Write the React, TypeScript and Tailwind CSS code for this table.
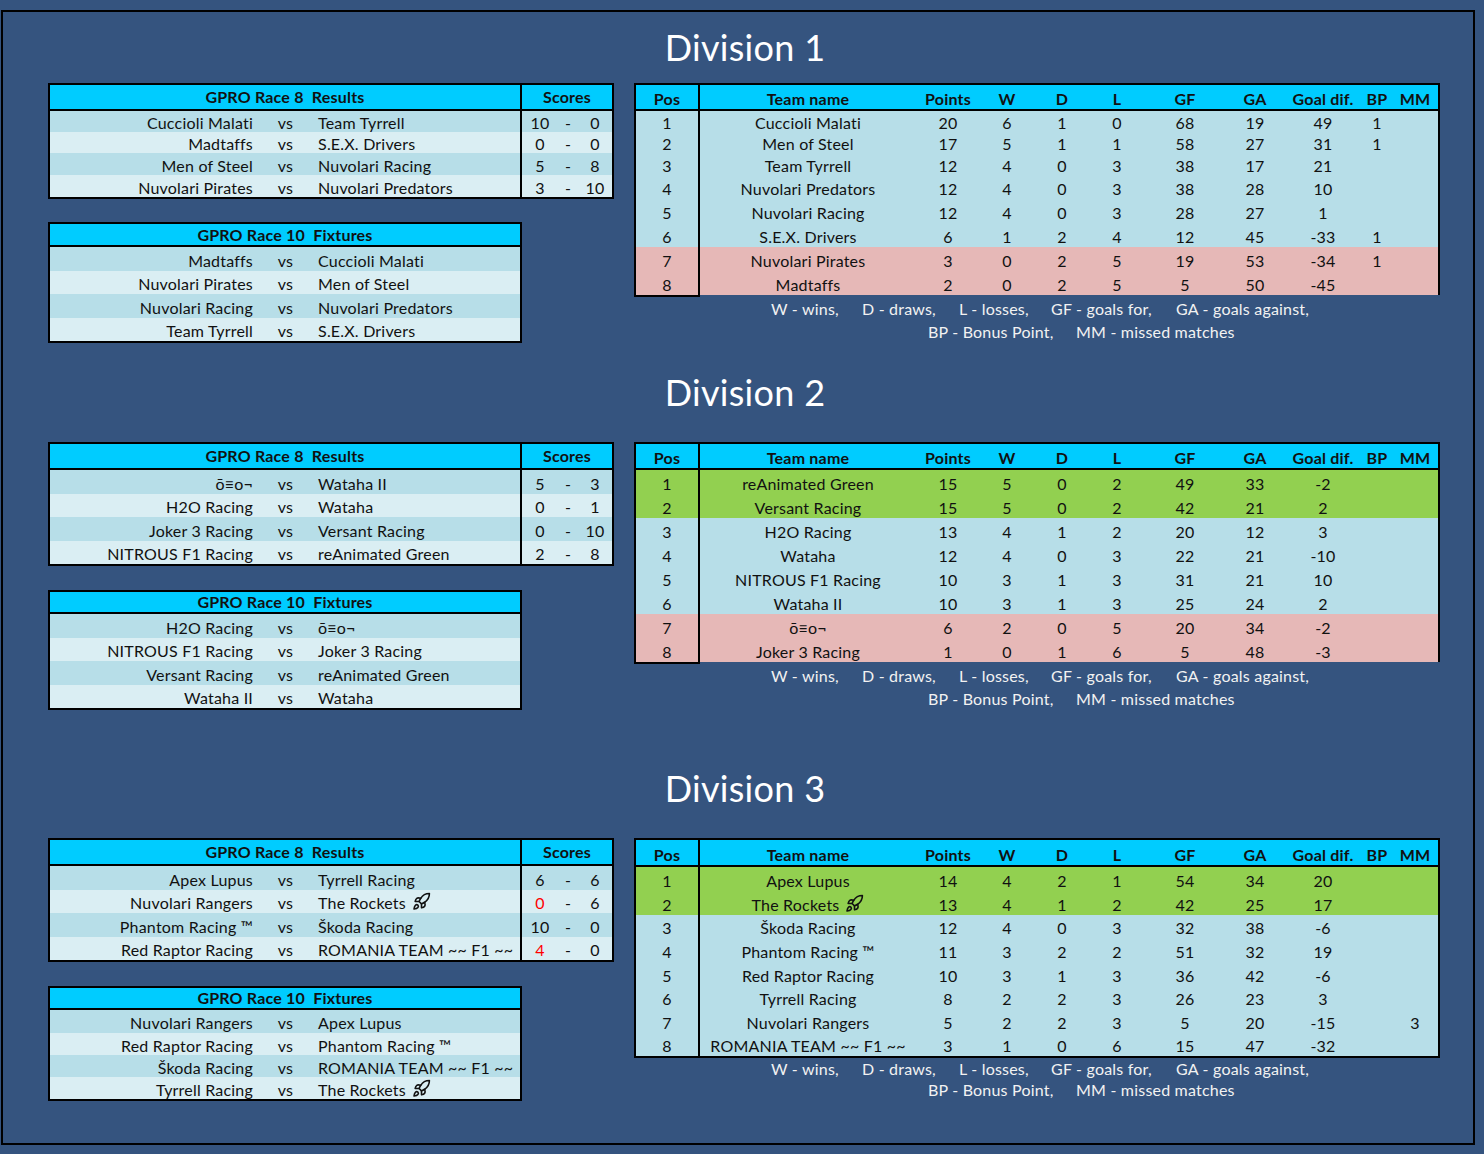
import React from 'react';
import { Rocket } from 'lucide-react';

type Node = React.ReactNode;

const RocketIcon = () => (
  <Rocket className="inline-block ml-[6px] w-[19px] h-[19px] -mt-[3px]" strokeWidth={2} />
);
const Rockets = () => (
  <span className="inline-flex items-center">
    The Rockets
    <RocketIcon />
  </span>
);
const WEIRD = 'ō≡o¬';

type Result = { home: Node; away: Node; s1: string; s2: string; red1?: boolean };
type Fixture = { home: Node; away: Node };
type Standing = {
  team: Node;
  pts: string;
  w: string;
  d: string;
  l: string;
  gf: string;
  ga: string;
  gd: string;
  bp?: string;
  mm?: string;
  c: 'b' | 'g' | 'p';
};

type Division = {
  name: string;
  titleBlock: string;
  resHeader: string;
  resRows: string[];
  results: Result[];
  fixGap: string;
  fixHeader: string;
  fixRows: string[];
  fixtures: Fixture[];
  stHeader: string;
  stRows: string[];
  standings: Standing[];
  fullBottom: boolean;
  lineH: string;
};

const rowBg = ['bg-[#b7dee8]', 'bg-[#daeef3]', 'bg-[#b7dee8]', 'bg-[#daeef3]'];
const stBg = { b: 'bg-[#b7dee8]', g: 'bg-[#92d050]', p: 'bg-[#e6b8b7]' };

const divisions: Division[] = [
  {
    name: 'Division 1',
    titleBlock: 'h-[71px] pb-[14px]',
    resHeader: 'h-[26px]',
    resRows: ['h-[21px]', 'h-[21px]', 'h-[22px]', 'h-[22px]'],
    results: [
      { home: 'Cuccioli Malati', away: 'Team Tyrrell', s1: '10', s2: '0' },
      { home: 'Madtaffs', away: 'S.E.X. Drivers', s1: '0', s2: '0' },
      { home: 'Men of Steel', away: 'Nuvolari Racing', s1: '5', s2: '8' },
      { home: 'Nuvolari Pirates', away: 'Nuvolari Predators', s1: '3', s2: '10' },
    ],
    fixGap: 'mt-[23px]',
    fixHeader: 'h-[23px]',
    fixRows: ['h-[24px]', 'h-[23px]', 'h-[24px]', 'h-[23px]'],
    fixtures: [
      { home: 'Madtaffs', away: 'Cuccioli Malati' },
      { home: 'Nuvolari Pirates', away: 'Men of Steel' },
      { home: 'Nuvolari Racing', away: 'Nuvolari Predators' },
      { home: 'Team Tyrrell', away: 'S.E.X. Drivers' },
    ],
    stHeader: 'h-[26px]',
    stRows: ['h-[21px]', 'h-[21px]', 'h-[22px]', 'h-[24px]', 'h-[24px]', 'h-[24px]', 'h-[25px]', 'h-[23px]'],
    standings: [
      { team: 'Cuccioli Malati', pts: '20', w: '6', d: '1', l: '0', gf: '68', ga: '19', gd: '49', bp: '1', c: 'b' },
      { team: 'Men of Steel', pts: '17', w: '5', d: '1', l: '1', gf: '58', ga: '27', gd: '31', bp: '1', c: 'b' },
      { team: 'Team Tyrrell', pts: '12', w: '4', d: '0', l: '3', gf: '38', ga: '17', gd: '21', c: 'b' },
      { team: 'Nuvolari Predators', pts: '12', w: '4', d: '0', l: '3', gf: '38', ga: '28', gd: '10', c: 'b' },
      { team: 'Nuvolari Racing', pts: '12', w: '4', d: '0', l: '3', gf: '28', ga: '27', gd: '1', c: 'b' },
      { team: 'S.E.X. Drivers', pts: '6', w: '1', d: '2', l: '4', gf: '12', ga: '45', gd: '-33', bp: '1', c: 'b' },
      { team: 'Nuvolari Pirates', pts: '3', w: '0', d: '2', l: '5', gf: '19', ga: '53', gd: '-34', bp: '1', c: 'p' },
      { team: 'Madtaffs', pts: '2', w: '0', d: '2', l: '5', gf: '5', ga: '50', gd: '-45', c: 'p' },
    ],
    fullBottom: false,
    lineH: 'h-[23px]',
  },
  {
    name: 'Division 2',
    titleBlock: 'h-[99px] pb-[28px]',
    resHeader: 'h-[26px]',
    resRows: ['h-[24px]', 'h-[23px]', 'h-[24px]', 'h-[23px]'],
    results: [
      { home: WEIRD, away: 'Wataha II', s1: '5', s2: '3' },
      { home: 'H2O Racing', away: 'Wataha', s1: '0', s2: '1' },
      { home: 'Joker 3 Racing', away: 'Versant Racing', s1: '0', s2: '10' },
      { home: 'NITROUS F1 Racing', away: 'reAnimated Green', s1: '2', s2: '8' },
    ],
    fixGap: 'mt-[24px]',
    fixHeader: 'h-[22px]',
    fixRows: ['h-[24px]', 'h-[23px]', 'h-[24px]', 'h-[23px]'],
    fixtures: [
      { home: 'H2O Racing', away: WEIRD },
      { home: 'NITROUS F1 Racing', away: 'Joker 3 Racing' },
      { home: 'Versant Racing', away: 'reAnimated Green' },
      { home: 'Wataha II', away: 'Wataha' },
    ],
    stHeader: 'h-[26px]',
    stRows: ['h-[24px]', 'h-[24px]', 'h-[24px]', 'h-[24px]', 'h-[24px]', 'h-[24px]', 'h-[24px]', 'h-[24px]'],
    standings: [
      { team: 'reAnimated Green', pts: '15', w: '5', d: '0', l: '2', gf: '49', ga: '33', gd: '-2', c: 'g' },
      { team: 'Versant Racing', pts: '15', w: '5', d: '0', l: '2', gf: '42', ga: '21', gd: '2', c: 'g' },
      { team: 'H2O Racing', pts: '13', w: '4', d: '1', l: '2', gf: '20', ga: '12', gd: '3', c: 'b' },
      { team: 'Wataha', pts: '12', w: '4', d: '0', l: '3', gf: '22', ga: '21', gd: '-10', c: 'b' },
      { team: 'NITROUS F1 Racing', pts: '10', w: '3', d: '1', l: '3', gf: '31', ga: '21', gd: '10', c: 'b' },
      { team: 'Wataha II', pts: '10', w: '3', d: '1', l: '3', gf: '25', ga: '24', gd: '2', c: 'b' },
      { team: WEIRD, pts: '6', w: '2', d: '0', l: '5', gf: '20', ga: '34', gd: '-2', c: 'p' },
      { team: 'Joker 3 Racing', pts: '1', w: '0', d: '1', l: '6', gf: '5', ga: '48', gd: '-3', c: 'p' },
    ],
    fullBottom: false,
    lineH: 'h-[23px]',
  },
  {
    name: 'Division 3',
    titleBlock: 'h-[128px] pb-[28px]',
    resHeader: 'h-[26px]',
    resRows: ['h-[24px]', 'h-[23px]', 'h-[24px]', 'h-[23px]'],
    results: [
      { home: 'Apex Lupus', away: 'Tyrrell Racing', s1: '6', s2: '6' },
      { home: 'Nuvolari Rangers', away: <Rockets />, s1: '0', s2: '6', red1: true },
      { home: 'Phantom Racing ™', away: 'Škoda Racing', s1: '10', s2: '0' },
      { home: 'Red Raptor Racing', away: 'ROMANIA TEAM ~~ F1 ~~', s1: '4', s2: '0', red1: true },
    ],
    fixGap: 'mt-[24px]',
    fixHeader: 'h-[22px]',
    fixRows: ['h-[23px]', 'h-[22px]', 'h-[22px]', 'h-[22px]'],
    fixtures: [
      { home: 'Nuvolari Rangers', away: 'Apex Lupus' },
      { home: 'Red Raptor Racing', away: 'Phantom Racing ™' },
      { home: 'Škoda Racing', away: 'ROMANIA TEAM ~~ F1 ~~' },
      { home: 'Tyrrell Racing', away: <Rockets /> },
    ],
    stHeader: 'h-[27px]',
    stRows: ['h-[24px]', 'h-[24px]', 'h-[23px]', 'h-[24px]', 'h-[24px]', 'h-[23px]', 'h-[24px]', 'h-[23px]'],
    standings: [
      { team: 'Apex Lupus', pts: '14', w: '4', d: '2', l: '1', gf: '54', ga: '34', gd: '20', c: 'g' },
      { team: <Rockets />, pts: '13', w: '4', d: '1', l: '2', gf: '42', ga: '25', gd: '17', c: 'g' },
      { team: 'Škoda Racing', pts: '12', w: '4', d: '0', l: '3', gf: '32', ga: '38', gd: '-6', c: 'b' },
      { team: 'Phantom Racing ™', pts: '11', w: '3', d: '2', l: '2', gf: '51', ga: '32', gd: '19', c: 'b' },
      { team: 'Red Raptor Racing', pts: '10', w: '3', d: '1', l: '3', gf: '36', ga: '42', gd: '-6', c: 'b' },
      { team: 'Tyrrell Racing', pts: '8', w: '2', d: '2', l: '3', gf: '26', ga: '23', gd: '3', c: 'b' },
      { team: 'Nuvolari Rangers', pts: '5', w: '2', d: '2', l: '3', gf: '5', ga: '20', gd: '-15', mm: '3', c: 'b' },
      { team: 'ROMANIA TEAM ~~ F1 ~~', pts: '3', w: '1', d: '0', l: '6', gf: '15', ga: '47', gd: '-32', c: 'b' },
    ],
    fullBottom: true,
    lineH: 'h-[21px]',
  },
];

function ResultsTable({ d }: { d: Division }) {
  return (
    <div className="w-[566px] border-2 border-black flex">
      <div className="w-[472px] border-r-2 border-black">
        <div className={`${d.resHeader} bg-[#00ccff] border-b-2 border-black flex items-center justify-center font-bold whitespace-pre`}>
          {'GPRO Race 8  Results'}
        </div>
        {d.results.map((r, i) => (
          <div key={i} className={`${d.resRows[i]} ${rowBg[i]} flex items-center pt-[3px]`}>
            <div className="w-[203px] text-right whitespace-nowrap">{r.home}</div>
            <div className="w-[65px] text-center">vs</div>
            <div className="flex-1 whitespace-nowrap">{r.away}</div>
          </div>
        ))}
      </div>
      <div className="flex-1">
        <div className={`${d.resHeader} bg-[#00ccff] border-b-2 border-black flex items-center justify-center font-bold`}>
          Scores
        </div>
        {d.results.map((r, i) => (
          <div key={i} className={`${d.resRows[i]} ${rowBg[i]} flex items-center pt-[3px]`}>
            <div className={`w-[36px] text-center ${r.red1 ? 'text-[#ff0000]' : ''}`}>{r.s1}</div>
            <div className="w-[20px] text-center">-</div>
            <div className="flex-1 text-center">{r.s2}</div>
          </div>
        ))}
      </div>
    </div>
  );
}

function FixturesTable({ d }: { d: Division }) {
  return (
    <div className={`${d.fixGap} w-[474px] border-2 border-black`}>
      <div className={`${d.fixHeader} bg-[#00ccff] border-b-2 border-black flex items-center justify-center font-bold whitespace-pre`}>
        {'GPRO Race 10  Fixtures'}
      </div>
      {d.fixtures.map((r, i) => (
        <div key={i} className={`${d.fixRows[i]} ${rowBg[i]} flex items-center pt-[3px]`}>
          <div className="w-[203px] text-right whitespace-nowrap">{r.home}</div>
          <div className="w-[65px] text-center">vs</div>
          <div className="flex-1 whitespace-nowrap">{r.away}</div>
        </div>
      ))}
    </div>
  );
}

const cols = [
  { k: 'team', label: 'Team name', w: 'w-[216px]' },
  { k: 'pts', label: 'Points', w: 'w-[64px]' },
  { k: 'w', label: 'W', w: 'w-[54px]' },
  { k: 'd', label: 'D', w: 'w-[56px]' },
  { k: 'l', label: 'L', w: 'w-[54px]' },
  { k: 'gf', label: 'GF', w: 'w-[82px]' },
  { k: 'ga', label: 'GA', w: 'w-[58px]' },
  { k: 'gd', label: 'Goal dif.', w: 'w-[78px]' },
  { k: 'bp', label: 'BP', w: 'w-[30px]' },
  { k: 'mm', label: 'MM', w: 'w-[46px]' },
] as const;

function Standings({ d }: { d: Division }) {
  return (
    <div className="flex items-start">
      <div className="w-[66px] border-2 border-black">
        <div className={`${d.stHeader} bg-[#00ccff] border-b-2 border-black flex items-center justify-center font-bold pt-[4px]`}>
          Pos
        </div>
        {d.standings.map((s, i) => (
          <div key={i} className={`${d.stRows[i]} ${stBg[s.c]} flex items-center justify-center pt-[3px]`}>
            {i + 1}
          </div>
        ))}
      </div>
      <div className={`w-[740px] border-t-2 border-r-2 border-black ${d.fullBottom ? 'border-b-2' : ''}`}>
        <div className={`${d.stHeader} bg-[#00ccff] border-b-2 border-black flex items-center font-bold pt-[4px]`}>
          {cols.map((c) => (
            <div key={c.k} className={`${c.w} text-center whitespace-nowrap`}>
              {c.label}
            </div>
          ))}
        </div>
        {d.standings.map((s, i) => (
          <div key={i} className={`${d.stRows[i]} ${stBg[s.c]} flex items-center pt-[3px]`}>
            {cols.map((c) => (
              <div key={c.k} className={`${c.w} flex justify-center whitespace-nowrap`}>
                {(s as any)[c.k] ?? ''}
              </div>
            ))}
          </div>
        ))}
      </div>
    </div>
  );
}

function Legend({ d }: { d: Division }) {
  return (
    <div className="text-[#f2f2f2]">
      <div className={`${d.lineH} flex items-center pl-[137px] whitespace-nowrap`}>
        <span className="w-[91px]">W - wins,</span>
        <span className="w-[97px]">D - draws,</span>
        <span className="w-[92px]">L - losses,</span>
        <span className="w-[125px]">GF - goals for,</span>
        <span>GA - goals against,</span>
      </div>
      <div className={`${d.lineH} flex items-center pl-[294px] whitespace-nowrap`}>
        <span className="w-[148px]">BP - Bonus Point,</span>
        <span>MM - missed matches</span>
      </div>
    </div>
  );
}

function DivisionBlock({ d }: { d: Division }) {
  return (
    <>
      <div className={`${d.titleBlock} flex items-end justify-center`}>
        <div className="text-[36px] leading-[44px] text-white pl-[14px] tracking-[0.3px]">{d.name}</div>
      </div>
      <div className="flex pl-[45px]">
        <div className="w-[566px]">
          <ResultsTable d={d} />
          <FixturesTable d={d} />
        </div>
        <div className="ml-[20px] w-[806px]">
          <Standings d={d} />
          <Legend d={d} />
        </div>
      </div>
    </>
  );
}

export default function App() {
  return (
    <div className="w-[1484px] h-[1154px] bg-[#35547f] pt-[10px] pl-[1px] font-['Lato','Noto_Sans',sans-serif] text-[16px] tracking-[0.2px] text-[#111]">
      <div className="w-[1474px] h-[1135px] border-2 border-black">
        {divisions.map((d) => (
          <DivisionBlock key={d.name} d={d} />
        ))}
      </div>
    </div>
  );
}
